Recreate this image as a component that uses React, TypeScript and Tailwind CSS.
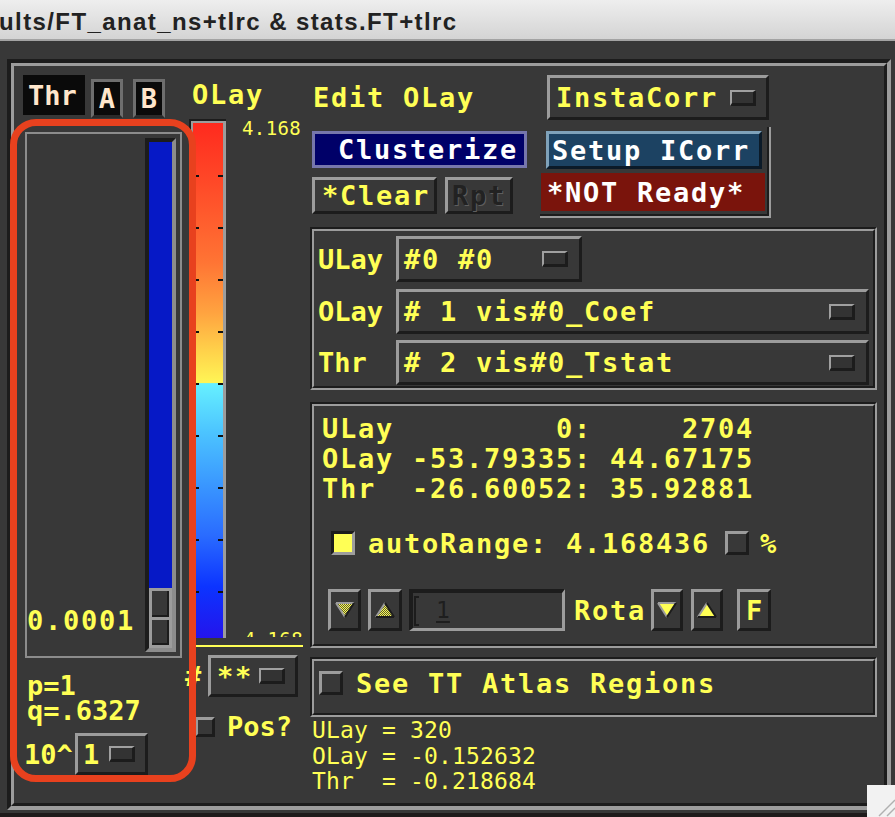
import React from "react";

const Y = "text-[#ffff55]";
const MONO = "font-['DejaVu_Sans_Mono',monospace]";
// main label font: 18px advance like the X bitmap font
const F = "text-[27px] font-bold tracking-[1.75px]";
const F0 = "text-[27px] font-bold";
const RAISED = "border-[3px] border-t-[#9c9c9c] border-l-[#9c9c9c] border-b-[#1c1c1c] border-r-[#1c1c1c]";
const SUNKEN = "border-[3px] border-t-[#1c1c1c] border-l-[#1c1c1c] border-b-[#9c9c9c] border-r-[#9c9c9c]";

const TICKS = [0, 1, 2, 3, 4, 5, 6, 7, 8].map((k) => 52 + 52 * k);

function Ind() {
  return (
    <div className="w-[26px] h-[16px] shrink-0 border-2 border-b-[3px] border-r-[3px] border-t-[#a0a0a0] border-l-[#a0a0a0] border-b-[#1c1c1c] border-r-[#1c1c1c] bg-[#333333]" />
  );
}

function Menu({ text, className = "", textCls = `${F} leading-none` }: { text: string; className?: string; textCls?: string }) {
  return (
    <div className={`${RAISED} bg-[#383838] flex items-center justify-between ${className}`}>
      <span className={`${textCls} ${Y} whitespace-pre`}>{text}</span>
      <Ind />
    </div>
  );
}

function Etched({ className = "", children }: { className?: string; children?: React.ReactNode }) {
  return (
    <div className={`border-2 border-t-[#1c1c1c] border-l-[#1c1c1c] border-b-[#9c9c9c] border-r-[#9c9c9c] ${className}`}>
      <div className="h-full border-2 border-t-[#9c9c9c] border-l-[#9c9c9c] border-b-[#1c1c1c] border-r-[#1c1c1c]">
        {children}
      </div>
    </div>
  );
}

function Check({ on = false, className = "" }: { on?: boolean; className?: string }) {
  return (
    <div
      className={`shrink-0 border-[3px] ${
        on
          ? "border-t-[#1c1c1c] border-l-[#1c1c1c] border-b-[#9c9c9c] border-r-[#9c9c9c] bg-[#ffff55]"
          : "border-t-[#9c9c9c] border-l-[#9c9c9c] border-b-[#1c1c1c] border-r-[#1c1c1c] bg-[#383838]"
      } ${className}`}
    />
  );
}

function Tri({ up = false, dim = false }: { up?: boolean; dim?: boolean }) {
  const fill = dim ? "url(#chk)" : "#ffff55";
  return (
    <svg width="20" height="16" viewBox="0 0 20 16">
      <defs>
        <pattern id="chk" width="2" height="2" patternUnits="userSpaceOnUse">
          <rect width="2" height="2" fill="#5a5a30" />
          <rect width="1" height="1" fill="#ffff55" />
          <rect x="1" y="1" width="1" height="1" fill="#ffff55" />
        </pattern>
      </defs>
      {up ? (
        <>
          <polygon points="10,1 19,15 1,15" fill={fill} />
          <line x1="10" y1="1" x2="1" y2="15" stroke="#9c9c9c" strokeWidth="2" />
          <line x1="10" y1="1" x2="19" y2="15" stroke="#1c1c1c" strokeWidth="2" />
          <line x1="1" y1="15" x2="19" y2="15" stroke="#1c1c1c" strokeWidth="2" />
        </>
      ) : (
        <>
          <polygon points="1,1 19,1 10,15" fill={fill} />
          <line x1="1" y1="1" x2="19" y2="1" stroke="#9c9c9c" strokeWidth="2" />
          <line x1="1" y1="1" x2="10" y2="15" stroke="#9c9c9c" strokeWidth="2" />
          <line x1="19" y1="1" x2="10" y2="15" stroke="#1c1c1c" strokeWidth="2" />
        </>
      )}
    </svg>
  );
}

function ArrowBtn({ up = false, dim = false, className = "" }: { up?: boolean; dim?: boolean; className?: string }) {
  return (
    <div className={`${RAISED} h-[42px] flex items-center justify-center ${className}`}>
      <Tri up={up} dim={dim} />
    </div>
  );
}

export default function App() {
  return (
    <div className={`relative w-[895px] h-[817px] overflow-hidden bg-[#383838] flex flex-col ${MONO}`}>
      {/* title bar */}
      <div className="h-[41px] shrink-0 bg-[linear-gradient(#eeeeee,#d4d4d4)] border-b-2 border-[#a3a3a3] pt-[10px] whitespace-nowrap overflow-hidden">
        <span className="-ml-[1px] font-['Liberation_Sans',Arial,sans-serif] font-bold text-[24px] tracking-[1.4px] leading-none text-[#222222] whitespace-pre">
          ults/FT_anat_ns+tlrc &amp; stats.FT+tlrc
        </span>
      </div>

      <div className="pl-[7px] pt-[18px] shrink-0">
        <div className="w-[884px] h-[751px] border-4 border-t-[#1c1c1c] border-l-[#1c1c1c] border-b-[#9c9c9c] border-r-[#9c9c9c]">
          <div className="h-full flex border-[3px] border-t-[#9c9c9c] border-l-[#9c9c9c] border-b-[#1c1c1c] border-r-[#1c1c1c]">
            {/* ---------- left: threshold slider + colorbar ---------- */}
            <div className="w-[291px] shrink-0 flex">
              <div className="w-[175px] pl-[9px] pt-[9px] flex flex-col">
                <div className="flex items-start h-[43px]">
                  <div className={`w-[62px] h-[40px] bg-[#0a0a0a] flex items-center pl-[5px] ${F0} leading-none text-[#ffe6cc]`}>Thr</div>
                  <div className="ml-[6px] mt-[4px] w-[32px] h-[39px] border-[3px] border-[#6e6e6e] border-b-[#2a2a2a] bg-[#0a0a0a] flex items-center justify-center">
                    <span className={`${F0} leading-none text-[#ffe6cc]`}>A</span>
                  </div>
                  <div className="ml-[10px] mt-[4px] w-[32px] h-[39px] border-[3px] border-[#6e6e6e] border-b-[#2a2a2a] bg-[#0a0a0a] flex items-center justify-center">
                    <span className={`${F0} leading-none text-[#ffe6cc]`}>B</span>
                  </div>
                </div>

                <div className="mt-[14px] ml-[2px] w-[157px] h-[526px] border-2 border-[#8c8c8c] flex">
                  <div className="flex-1 flex items-end pb-[22px]">
                    <span className={`${F} leading-none ${Y}`}>0.0001</span>
                  </div>
                  <div className="w-[31px] my-[4px] mr-[4px] border-4 border-t-[#1c1c1c] border-l-[#1c1c1c] border-b-[#8c8c8c] border-r-[#8c8c8c] flex flex-col">
                    <div className="flex-1 bg-[#0619c6]" />
                    <div className="h-[60px] bg-[#9c9c9c] p-[3px] flex flex-col gap-[3px]">
                      <div className="flex-1 bg-[#383838] border-b-2 border-r-2 border-[#1c1c1c]" />
                      <div className="flex-1 bg-[#383838] border-b-2 border-r-2 border-[#1c1c1c]" />
                    </div>
                  </div>
                </div>

                <div className={`mt-[15px] ml-[4px] ${F0} leading-[25px] ${Y}`}>
                  <div>p=1</div>
                  <div>q=.6327</div>
                </div>

                <div className="mt-[10px] ml-[1px] flex items-center">
                  <span className={`w-[51px] ${F0} leading-none ${Y}`}>10^</span>
                  <Menu text="1" className="w-[73px] h-[42px] pl-[5px] pr-[10px]" />
                </div>
              </div>

              <div className="w-[116px] flex flex-col">
                <div className={`mt-[15px] ml-[3px] ${F} leading-none ${Y}`}>OLay</div>
                <div className="mt-[11px] flex h-[519px]">
                  <div className="w-[37px] border-t-2 border-l-2 border-[#1c1c1c]">
                    <div className="relative h-full border-t-2 border-l-2 border-r-[3px] border-[#9c9c9c] bg-[linear-gradient(to_bottom,#ff2a1e_0%,#ff4a28_12%,#ff7434_27%,#ffa440_37%,#ffd04a_44%,#fff555_50.4%,#66f0ff_50.6%,#4cc4ff_60%,#3a98ff_70%,#2a6cff_80%,#0c34ff_90%,#2414ec_100%)]">
                      {TICKS.map((t) => (
                        <React.Fragment key={t}>
                          <div className="absolute left-[2px] w-[4px] h-[2px] bg-[#111111]" style={{ top: t }} />
                          <div className="absolute right-0 w-[5px] h-[2px] bg-[#111111]" style={{ top: t }} />
                        </React.Fragment>
                      ))}
                    </div>
                  </div>
                  <div className="flex-1 flex flex-col justify-between pl-[16px]">
                    <span className={`text-[19px] leading-none tracking-[0.4px] ${Y}`}>4.168</span>
                    <div className="-ml-[10px] h-[5px] mb-[1px] overflow-hidden">
                      <div className={`-mt-[2px] text-[19px] leading-none tracking-[0.4px] ${Y}`}>-4.168</div>
                    </div>
                  </div>
                </div>
                <div className="mt-[7px] ml-[6px] w-[108px] h-[2px] bg-[#ffff55]" />

                <div className="mt-[8px] -ml-[4px] flex items-center">
                  <span className={`w-[23px] ${F0} leading-none ${Y}`}>#</span>
                  <Menu text="**" className="w-[90px] h-[42px] pl-[6px] pr-[10px]" />
                </div>

                <div className="mt-[16px] ml-[6px] flex items-center">
                  <Check className="w-[20px] h-[20px]" />
                  <span className={`ml-[12px] ${F0} leading-none ${Y}`}>Pos?</span>
                </div>
              </div>
            </div>

            {/* ---------- right: controls ---------- */}
            <div className="flex-1 pl-[5px] flex flex-col">
              <div className="h-[161px] flex shrink-0">
                <div className="w-[230px] flex flex-col">
                  <div className={`mt-[18px] ml-[3px] ${F} leading-none ${Y}`}>Edit OLay</div>
                  <div className="mt-[20px] ml-[2px] w-[215px] h-[37px] border-[3px] border-[#7676ac] bg-[#000068] pl-[23px] flex items-center">
                    <span className={`${F} leading-none text-white`}>Clusterize</span>
                  </div>
                  <div className="mt-[9px] ml-[2px] flex gap-[8px]">
                    <div className={`${RAISED} w-[125px] h-[37px] flex items-center pl-[7px]`}>
                      <span className={`${F} leading-none ${Y}`}>*Clear</span>
                    </div>
                    <div className={`${RAISED} w-[68px] h-[37px] flex items-center pl-[4px]`}>
                      <span className={`${F} leading-none text-[#222222] [text-shadow:1px_1px_0_#5e5e5e]`}>Rpt</span>
                    </div>
                  </div>
                </div>
                <div className="flex flex-col">
                  <div className={`ml-[7px] mt-[9px] w-[222px] h-[45px] ${RAISED} flex items-center justify-between pl-[6px] pr-[10px]`}>
                    <span className={`${F} leading-none ${Y}`}>InstaCorr</span>
                    <Ind />
                  </div>
                  <div className="mt-[7px] w-[231px] h-[91px] border-r-2 border-b-2 border-[#9c9c9c]">
                    <div className="h-full border-r-2 border-b-2 border-[#1c1c1c] flex flex-col">
                      <div className="ml-[6px] mt-[4px] w-[216px] h-[38px] border-[3px] border-t-[#7fa2ba] border-l-[#7fa2ba] border-b-[#0b1a28] border-r-[#0b1a28] bg-[#1c4262] flex items-center pl-[3px]">
                        <span className={`${F} leading-none text-white`}>Setup ICorr</span>
                      </div>
                      <div className="ml-[1px] mt-[4px] w-[224px] h-[38px] bg-[#7a140c] flex items-center pl-[6px]">
                        <span className={`${F} leading-none text-white`}>*NOT Ready*</span>
                      </div>
                    </div>
                  </div>
                </div>
              </div>

              <Etched className="w-[567px] h-[163px] shrink-0">
                <div className="pt-[5px] pl-[4px] flex flex-col">
                  <div className="flex items-center h-[46px]">
                    <span className={`w-[78px] ${F0} leading-none ${Y}`}>ULay</span>
                    <Menu text="#0 #0" className="w-[186px] h-[46px] pl-[5px] pr-[11px]" />
                  </div>
                  <div className="mt-[7px] flex items-center h-[45px]">
                    <span className={`w-[78px] ${F0} leading-none ${Y}`}>OLay</span>
                    <Menu text="# 1 vis#0_Coef" className="w-[473px] h-[45px] pl-[5px] pr-[11px]" />
                  </div>
                  <div className="mt-[6px] flex items-center h-[45px]">
                    <span className={`w-[78px] ${F0} leading-none ${Y}`}>Thr</span>
                    <Menu text="# 2 vis#0_Tstat" className="w-[473px] h-[45px] pl-[5px] pr-[11px]" />
                  </div>
                </div>
              </Etched>

              <Etched className="mt-[12px] w-[567px] h-[246px] shrink-0">
                <div className="pt-[8px] pl-[8px] flex flex-col">
                  <div className={`${F} leading-[30px] ${Y} whitespace-pre`}>
                    <div>ULay         0:     2704</div>
                    <div>OLay -53.79335: 44.67175</div>
                    <div>Thr  -26.60052: 35.92881</div>
                  </div>
                  <div className="mt-[27px] ml-[9px] h-[24px] flex items-center">
                    <Check on className="w-[24px] h-[24px]" />
                    <span className={`ml-[13px] ${F} leading-none ${Y}`}>autoRange: 4.168436</span>
                    <Check className="ml-[15px] w-[24px] h-[24px]" />
                    <span className={`ml-[11px] ${F} leading-none ${Y}`}>%</span>
                  </div>
                  <div className="mt-[34px] flex items-center">
                    <ArrowBtn dim className="ml-[6px] w-[33px]" />
                    <ArrowBtn up dim className="ml-[7px] w-[34px]" />
                    <div className={`ml-[7px] w-[156px] h-[42px] ${SUNKEN} border-t-4 border-l-4 flex items-center pl-[1px]`}>
                      <div className="w-[5px] h-[30px] border-l-2 border-t-2 border-b-2 border-[#1c1c1c]" />
                      <span className="ml-[17px] text-[23px] leading-none text-[#1e1e1e] underline underline-offset-[3px]">1</span>
                    </div>
                    <span className={`ml-[9px] ${F} leading-none ${Y}`}>Rota</span>
                    <ArrowBtn className="ml-[5px] w-[32px]" />
                    <ArrowBtn up className="ml-[8px] w-[32px]" />
                    <div className={`${RAISED} ml-[14px] w-[34px] h-[42px] flex items-center justify-center`}>
                      <span className={`${F0} leading-none ${Y}`}>F</span>
                    </div>
                  </div>
                </div>
              </Etched>

              <Etched className="mt-[9px] w-[567px] h-[60px] shrink-0">
                <div className="pt-[10px] pl-[5px] h-[34px] flex items-center">
                  <Check className="w-[24px] h-[24px]" />
                  <span className={`ml-[13px] ${F} leading-none ${Y}`}>See TT Atlas Regions</span>
                </div>
              </Etched>

              <div className={`mt-[1px] ml-[2px] text-[23px] leading-[25.5px] tracking-[0.15px] ${Y} whitespace-pre`}>
                <div>ULay = 320</div>
                <div>OLay = -0.152632</div>
                <div>Thr  = -0.218684</div>
              </div>
            </div>
          </div>
        </div>
      </div>
      <div className="flex-1 border-t-[3px] border-[#383838] bg-[#1f1b1b]" />

      {/* hand-drawn red annotation around the threshold panel */}
      <div className="absolute left-[10px] top-[119px] w-[186px] h-[663px] border-[7px] border-[#e8411e] rounded-[26px] pointer-events-none" />

      {/* resize grip */}
      <div className="absolute right-0 bottom-0 w-[28px] h-[32px] bg-[#f2f2f2]">
        <svg width="28" height="32" viewBox="0 0 28 32">
          <line x1="12" y1="31" x2="28" y2="15" stroke="#b0b0b0" strokeWidth="1.5" />
          <line x1="20" y1="31" x2="28" y2="23" stroke="#b0b0b0" strokeWidth="1.5" />
        </svg>
      </div>
    </div>
  );
}
